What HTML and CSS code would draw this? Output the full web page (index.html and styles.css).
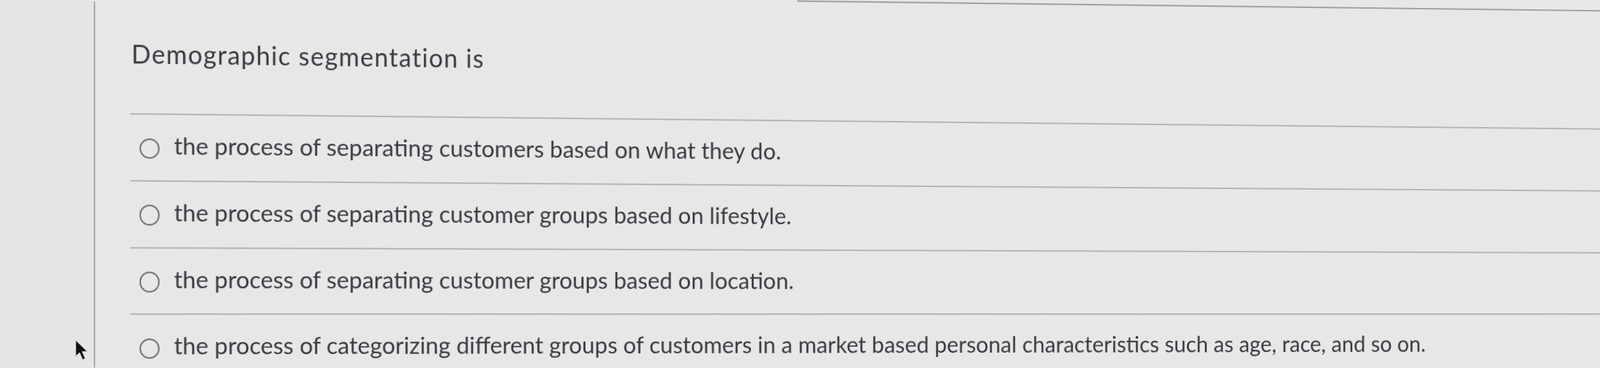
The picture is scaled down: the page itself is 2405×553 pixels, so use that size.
FILE: index.html
```html
<!DOCTYPE html>
<html lang="en">
<head>
<meta charset="utf-8">
<title>Demographic segmentation</title>
<link rel="stylesheet" href="styles.css">
</head>
<body>
<div class="screen">
  <aside class="sidebar"></aside>
  <main class="question">
    <div class="top-rule"></div>
    <h1 class="prompt">Demographic segmentation is</h1>
    <ul class="choices">
      <li class="choice">
        <label class="choice-label"><span class="radio"></span><span class="choice-text">the process of separating customers based on what they do.</span></label>
      </li>
      <li class="choice">
        <label class="choice-label"><span class="radio"></span><span class="choice-text">the process of separating customer groups based on lifestyle.</span></label>
      </li>
      <li class="choice">
        <label class="choice-label"><span class="radio"></span><span class="choice-text">the process of separating customer groups based on location.</span></label>
      </li>
      <li class="choice choice--last">
        <label class="choice-label"><span class="radio"></span><span class="choice-text">the process of categorizing different groups of customers in a market based personal characteristics such as age, race, and so on.</span></label>
      </li>
    </ul>
  </main>
</div>
<svg class="cursor" viewBox="0 0 22 34" width="22" height="34" aria-hidden="true">
  <path d="M1.5 1.5 L1.5 27 L7.5 21.5 L12 32 L16.5 30 L12 19.5 L20 19.5 Z" fill="#111" stroke="#d8dbd8" stroke-width="1.6" stroke-linejoin="round"/>
</svg>
</body>
</html>
```

FILE: styles.css
```css
html, body {
  margin: 0;
  padding: 0;
}

body {
  position: relative;
  height: 553px;
  background: #e6e8e7;
  font-family: Lato, "Noto Sans", "Liberation Sans", sans-serif;
  color: #3b3a42;
  overflow: hidden;
}

/* the photographed screen: its right side is slightly farther from the camera */
.screen {
  display: flex;
  width: 100%;
  height: 507.4px;
  margin-top: 38.86px;
  transform: perspective(1000px) rotateY(1.948deg) scale(1.08972);
  transform-origin: 0 433.14px;
}

.sidebar {
  flex: none;
  width: 130.3px;
  background: #e4e7e6;
  border-right: 2px solid #a8aaaf;
}

.question {
  flex: 1;
  min-width: 0;
  padding-left: 48.5px;
}

.top-rule {
  height: 0;
  margin: -18.35px 0 0 966.3px;
  border-top: 2px solid #9d9fa3;
  transform: skewY(-0.25deg);
  transform-origin: 0 0;
}

.prompt {
  margin: 65px 0 0 1.8px;
  font-size: 35.79px;
  line-height: 45.88px;
  letter-spacing: 1.376px;
  font-weight: 400;
}

.choices {
  list-style: none;
  margin: 59.65px 0 0;
  padding: 0;
}

.choice {
  box-sizing: border-box;
  height: 92.69px;
  padding-top: 22px;
  border-top: 2px solid #b2b3b5;
}

.choice--last {
  height: auto;
}

.choice-label {
  display: flex;
  align-items: flex-start;
  gap: 20.19px;
  padding-left: 12.85px;
}

.radio {
  flex: none;
  box-sizing: border-box;
  width: 28.45px;
  height: 28.45px;
  margin-top: 10.55px;
  border: 2px solid #6c6c6f;
  border-radius: 50%;
}

.choice-text {
  font-size: 33.59px;
  white-space: nowrap;
}

.cursor {
  position: absolute;
  left: 112px;
  top: 509px;
}
```
